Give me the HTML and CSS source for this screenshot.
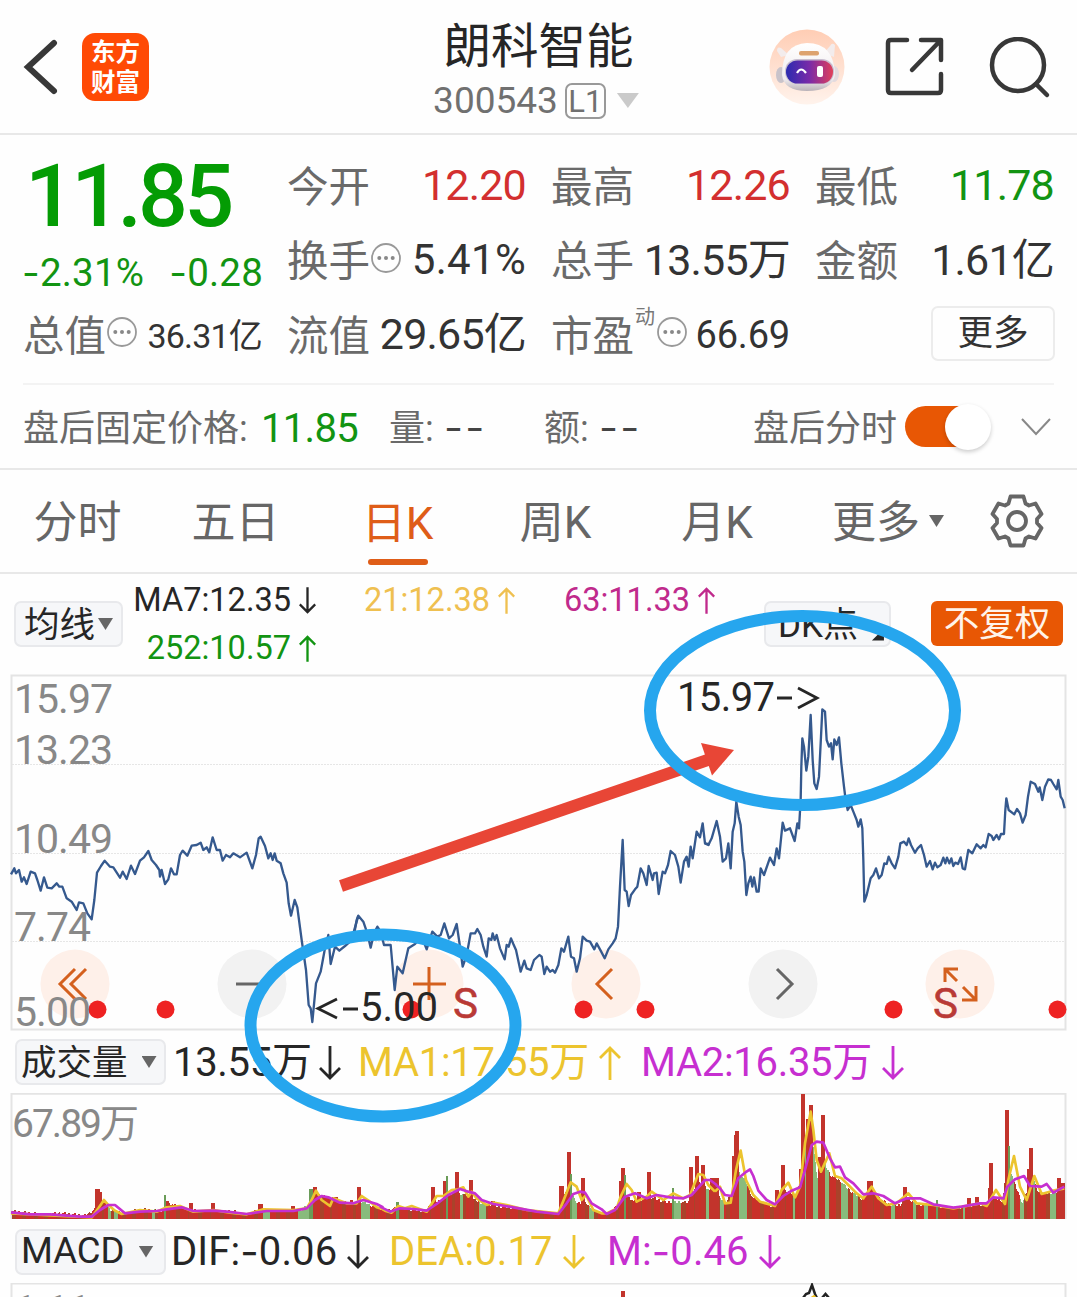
FILE: index.html
```html
<!DOCTYPE html>
<html lang="zh-CN">
<head>
<meta charset="utf-8">
<title>朗科智能 300543</title>
<link rel="stylesheet" href="styles.css">
</head>
<body>
<svg width="0" height="0" class="defs">
  <symbol id="down" viewBox="0 0 22 34"><path d="M11 0V32M1 22L11 32L21 22"/></symbol>
  <symbol id="up" viewBox="0 0 22 34"><path d="M11 34V2M1 12L11 2L21 12"/></symbol>
  <symbol id="info" viewBox="0 0 30 30"><circle cx="15" cy="15" r="14" fill="none" stroke="#999" stroke-width="1.8"/><g fill="#888"><circle cx="8.3" cy="15" r="2"/><circle cx="15" cy="15" r="2"/><circle cx="21.7" cy="15" r="2"/></g></symbol>
</svg>
<main class="app">
  <header class="top">
    <div class="top-left">
      <svg class="back" viewBox="0 0 36 56"><path d="M31 4L5 28L31 52"/></svg>
      <div class="logo"><span>东方</span><span>财富</span></div>
    </div>
    <div class="title">
      <h1>朗科智能</h1>
      <div class="code"><span class="code-no">300543</span><span class="level">L1</span><i class="tri tri-light"></i></div>
    </div>
    <div class="top-right">
      <svg class="robot" viewBox="0 0 76 76">
        <defs>
          <linearGradient id="rb" x1="0" y1="0" x2="0" y2="1"><stop offset="0" stop-color="#ffcdb4"/><stop offset="1" stop-color="#fff3ec"/></linearGradient>
          <linearGradient id="rv"><stop offset="0" stop-color="#2b2bb0"/><stop offset=".5" stop-color="#7a2aa8"/><stop offset="1" stop-color="#e0405a"/></linearGradient>
          <linearGradient id="rw" x1="0" y1="0" x2="0" y2="1"><stop offset="0" stop-color="#fff"/><stop offset=".75" stop-color="#f0ecee"/><stop offset="1" stop-color="#b9b2b8"/></linearGradient>
        </defs>
        <circle cx="38" cy="38" r="37.5" fill="url(#rb)"/>
        <path d="M8 22Q8 17 12 19L20 26L12 28ZM66 16Q63 13 61 17L55 24L65 28Z" fill="#f3ecec"/>
        <ellipse cx="12" cy="46" rx="5" ry="8" fill="#c9c3ca"/><ellipse cx="65" cy="45" rx="5" ry="8" fill="#e3dade"/>
        <path d="M13 46Q13 15 38 14Q65 14 66 46Q63 62 38 62Q15 62 13 46Z" fill="url(#rw)"/>
        <rect x="30" y="22" width="20" height="4.5" rx="2" fill="#dda36f"/>
        <rect x="16" y="30" width="49" height="25" rx="12" fill="#c9bfd0"/>
        <rect x="17" y="31.500" width="47" height="23" rx="11.500" fill="url(#rv)"/>
        <path d="M28 44Q32 37 37 44" fill="none" stroke="#fff" stroke-width="2.2"/><rect x="48" y="37" width="6" height="11" rx="2" fill="#fff"/>
      </svg>
      <svg class="share" viewBox="0 0 60 60"><path d="M22 3H6Q3 3 3 6V53Q3 56 6 56H53Q56 56 56 53V37M36 3H56V23M55 4L27 33"/></svg>
      <svg class="search" viewBox="0 0 62 62"><circle cx="29" cy="28" r="26"/><path d="M47 47L58 58"/></svg>
    </div>
  </header>

  <section class="quote">
    <div class="price">
      <strong>11.85</strong>
      <div class="change"><span><b>-</b>2.31%</span><span><b>-</b>0.28</span></div>
    </div>
    <div class="cell"><label>今开</label><span class="v red">12.20</span></div>
    <div class="cell"><label>最高</label><span class="v red">12.26</span></div>
    <div class="cell"><label>最低</label><span class="v green">11.78</span></div>
    <div class="cell"><label>换手</label><svg class="info"><use href="#info"/></svg><span class="v v42">5.41%</span></div>
    <div class="cell"><label>总手</label><span class="v">13.55万</span></div>
    <div class="cell"><label>金额</label><span class="v">1.61亿</span></div>
    <div class="cell"><label>总值</label><svg class="info"><use href="#info"/></svg><span class="v v34">36.31亿</span></div>
    <div class="cell"><label>流值</label><span class="v v43">29.65亿</span></div>
    <div class="cell"><label>市盈</label><sup>动</sup><svg class="info"><use href="#info"/></svg><span class="v v38">66.69</span></div>
    <div class="cell"><button class="more">更多</button></div>
  </section>

  <section class="after">
    <span class="a1">盘后固定价格:</span><span class="a2 green">11.85</span>
    <span class="a3">量: <b>--</b></span><span class="a4">额: <b>--</b></span>
    <span class="a5">盘后分时</span>
    <span class="toggle"><i></i></span>
    <svg class="chev" viewBox="0 0 30 18"><path d="M1 1L15 16L29 1"/></svg>
  </section>

  <nav class="tabs">
    <span>分时</span><span>五日</span><span class="on">日K</span><span>周K</span><span>月K</span>
    <span class="tab-more">更多<i class="tri"></i></span>
    <svg class="gear" viewBox="-27 -27 54 54"><path d="M-6.500 -24.500H6.500L8.500 -17.500L12 -15.500L18.500 -17.500L24.500 -7L20 -2V2L24.500 7L18.500 17.500L12 15.500L8.500 17.500L6.500 24.500H-6.500L-8.500 17.500L-12 15.500L-18.500 17.500L-24.500 7L-20 2V-2L-24.500 -7L-18.500 -17.500L-12 -15.500L-8.500 -17.500Z"/><circle r="9"/></svg>
  </nav>

  <section class="ma">
    <button class="pill">均线<i class="tri"></i></button>
    <div class="ma-list">
      <span class="dark">MA7:12.35<svg class="ar"><use href="#down"/></svg></span>
      <span class="gold">21:12.38<svg class="ar"><use href="#up"/></svg></span>
      <span class="rose">63:11.33<svg class="ar"><use href="#up"/></svg></span>
      <span class="green">252:10.57<svg class="ar"><use href="#up"/></svg></span>
    </div>
    <button class="pill dk">DK点<i></i></button>
    <button class="adj">不复权</button>
  </section>

  <svg class="kline" viewBox="0 674 1077 357">
    <path class="frame" d="M11.500 1029.500V675.500H1065.500V1029.500Z"/>
    <path class="grid" d="M12 764.500H1065M12 853.500H1065M12 941.500H1065"/>
    <g class="btn-warm"><circle cx="75" cy="984" r="34.500"/><circle cx="429" cy="984" r="34.500"/><circle cx="606" cy="984" r="34.500"/><circle cx="960" cy="984" r="34.500"/></g>
    <g class="btn-cool"><circle cx="252" cy="984" r="34.500"/><circle cx="783" cy="984" r="34.500"/></g>
    <g class="line">
      <polyline transform="translate(0 820) scale(.33333)" points="33,163 43,145 48,160 57,150 65,185 72,172 80,192 92,155 105,160 112,180 122,212 132,172 142,203 155,205 170,190 178,200 187,200 200,235 215,245 230,270 237,247 250,250 262,280 275,298 283,240 291,158 303,138 314,122 330,140 340,142 360,173 368,155 380,177 393,137 405,162 420,122 432,112 445,93 455,120 468,135 478,150 480,170 485,150 495,192 505,178 513,145 522,163 530,163 540,105 548,92 562,107 575,77 590,75 602,68 610,90 620,82 628,97 638,52 650,90 660,90 668,122 678,105 690,112 700,100 720,112 740,98 757,145 768,105 776,55 782,50 795,78 805,115 812,100 818,120 824,100 830,122 842,130 850,160 860,188 866,250 873,287 884,240 892,262 905,360 918,450 926,555 932,565 937,606 948,490 962,455 975,385 985,345 992,432 1005,380 1018,392 1035,378 1050,365 1062,345 1070,300 1075,287"/>
      <polyline transform="translate(350 820) scale(.33333)" points="10,340 25,287 40,305 52,340 62,383 72,340 82,320 92,335 102,375 122,375 134,510 142,440 158,460 175,385 195,372 215,350 230,388 247,335 262,350 272,345 283,310 297,355 308,345 320,312 330,380 338,440 350,405 362,340 375,340 382,327 392,345 400,380 410,410 416,355 424,360 428,340 434,360 440,345 450,385 464,418 470,375 476,380 483,355 490,372 498,390 512,455 523,422 530,445 542,450 552,420 568,405 575,410 583,462 590,440 600,455 608,450 615,458 625,435 634,385 642,395 655,350 663,410 672,415 680,455 690,415 698,350 710,362 720,365 733,388 740,370 752,392 764,415 775,388 788,370 797,355 804,320 810,200 818,60 824,210 830,215 836,258 843,225 855,208 862,200 872,145 880,160 890,195 896,138 908,180 912,160 920,158 926,222 938,155 945,160 954,135 962,93 975,105 985,140 992,188 1002,125 1010,110 1016,140 1022,80 1028,115 1040,35 1050,52 1058,10 1065,70 1080,73"/>
      <polyline transform="translate(700 760) scale(.33333)" points="15,250 25,255 35,235 50,183 60,230 68,305 78,295 85,250 92,325 98,215 104,190 109,125 116,170 122,195 128,275 133,305 139,405 145,370 152,350 157,380 162,352 170,395 176,395 182,325 192,345 210,293 222,315 230,265 237,295 248,188 255,212 270,205 284,243 292,190 297,205 302,120 304,20 307,-65 312,-40 319,32 325,-10 332,-135 338,0 343,70 350,87 357,50 363,-70 367,-152 375,-145 380,-60 387,-40 393,-50 398,-2 403,-62 410,-45 417,-68 424,10 432,80 437,120 443,150 452,135 460,155 470,180 475,200 482,178 487,205 490,300 493,425 500,405 512,355 520,345 528,325 537,355 545,345 553,310 560,312 566,290 575,310 585,325 595,290 601,250 612,245 620,255 626,235 633,255 645,278 653,265 663,255 672,285 680,320 690,303 698,328 705,308 712,322 722,315 730,293 736,310 741,293 748,310 754,295 760,318 766,308 774,312 782,292 788,325 795,328 805,270 817,280 830,253 842,265 850,255 857,262 866,222 875,228 880,240 890,225 897,238 903,222 912,222 916,150 919,115 926,150 943,163 951,147 960,160 968,188 977,165 984,110 992,65 1005,72 1015,95 1019,82 1027,120 1035,80 1045,58 1053,60 1060,72 1070,88 1075,60 1082,110 1088,120 1094,145"/>
    </g>
    <g class="ico-warm"><path d="M75 969L60 984L75 999M86 969L71 984L86 999M413 984H446M429 967V1000M612 969L597 984L612 999M957 981L945 969M945 982V969H958M963 987L975 999M962 1000H976V986"/></g>
    <g class="ico-cool"><path d="M236 984H268M777 969L792 984L777 999"/></g>
    <g class="dot"><circle cx="97.500" cy="1009.500" r="9"/><circle cx="165.500" cy="1009.500" r="9"/><circle cx="411.500" cy="1009.500" r="9"/><circle cx="583.500" cy="1009.500" r="9"/><circle cx="645.500" cy="1009.500" r="9"/><circle cx="893.500" cy="1009.500" r="9"/><circle cx="1057.500" cy="1009.500" r="9"/></g>
    <g class="axis">
      <text x="14" y="713" textLength="99">15.97</text><text x="14" y="764" textLength="99">13.23</text><text x="14" y="853" textLength="99">10.49</text><text x="14" y="941" textLength="77">7.74</text><text x="14" y="1026" textLength="77">5.00</text>
    </g>
    <g class="mark">
      <text x="677" y="711" textLength="98">15.97</text><path d="M777 698H792M798 688L817 698L798 708"/>
      <text x="360" y="1021" textLength="78">5.00</text><path d="M337 999L318 1008.500L337 1018M343 1009H358"/>
    </g>
    <g class="sell"><text x="453" y="1018">S</text><text x="933" y="1018">S</text></g>
  </svg>

  <section class="ind ind-vol">
    <button class="pill">成交量<i class="tri"></i></button>
    <span class="dark">13.55万<svg class="ar"><use href="#down"/></svg></span>
    <span class="yellow">MA1:17.55万<svg class="ar"><use href="#up"/></svg></span>
    <span class="violet">MA2:16.35万<svg class="ar"><use href="#down"/></svg></span>
  </section>

  <svg class="volume" viewBox="0 1093 1077 127">
    <path class="frame" d="M11.500 1219V1093.800H1065.500V1219"/>
    <g class="axis peak"><text x="12" y="1137" textLength="127">67.89万</text></g>
    <g id="bars" shape-rendering="crispEdges"></g>
    <g class="avg yellow">
      <polyline transform="translate(0 1070) scale(.33333)" points="33,430 275,442 295,415 312,390 325,405 345,422 365,432 420,420 470,425 500,412 540,408 580,425 640,420 690,428 740,433 790,418 880,420 920,415 935,390 948,362 965,390 990,408 1000,385 1040,400 1070,400 1085,378 1110,395 1130,412 1150,418"/>
      <polyline transform="translate(380 1070) scale(.33333)" points="0,412 15,422 35,428 55,408 75,415 95,408 140,425 170,378 190,378 215,360 235,358 250,352 265,380 275,365 290,385 320,405 340,398 380,405 440,420 535,430 555,380 572,337 590,350 605,390 618,375 640,420 665,430 680,430 710,415 722,380 740,342 755,360 770,395 800,380 815,365 850,390 880,370 910,385 930,375 955,312 970,315 985,345 1005,365"/>
      <polyline transform="translate(720 1070) scale(.33333)" points="-15,365 0,350 15,400 32,398 48,300 62,242 78,330 100,375 120,395 165,408 185,360 205,338 225,382 240,350 255,220 272,125 280,180 290,270 303,305 328,250 345,318 365,325 385,345 410,370 430,385 455,350 475,385 500,405 530,400 565,370 590,400 640,405 700,415 780,400 800,408 828,360 855,402 865,330 882,258 900,350 920,390 943,318 965,372 1000,362 1033,355"/>
    </g>
    <g class="avg violet">
      <polyline transform="translate(0 1070) scale(.33333)" points="33,427 90,433 150,433 240,440 275,440 300,420 325,405 345,405 375,430 420,425 470,423 500,418 545,412 580,423 640,422 680,425 740,432 800,423 880,423 920,415 945,390 965,378 985,382 1020,398 1060,400 1090,390 1130,402 1150,412"/>
      <polyline transform="translate(380 1070) scale(.33333)" points="0,410 30,425 60,415 100,417 140,422 170,402 205,375 240,357 265,365 285,370 305,390 340,402 400,412 470,425 535,432 560,400 580,372 600,365 615,368 635,400 665,418 680,432 705,420 735,380 765,370 800,385 830,375 870,382 910,385 935,375 975,330 990,330 1010,345"/>
      <polyline transform="translate(720 1070) scale(.33333)" points="-12,345 0,355 15,375 35,378 55,325 75,308 90,298 100,318 115,362 140,390 165,403 190,378 215,362 240,352 255,300 275,225 290,215 310,218 330,265 345,292 360,290 375,322 400,340 430,373 460,370 490,378 525,400 560,385 600,385 640,403 700,413 725,410 780,400 800,400 820,382 850,385 862,350 885,328 912,318 930,348 965,350 980,342 1000,368 1033,350"/>
    </g>
  </svg>

  <section class="ind ind-macd">
    <button class="pill">MACD<i class="tri"></i></button>
    <span class="dark">DIF:<b>-</b>0.06<svg class="ar"><use href="#down"/></svg></span>
    <span class="yellow">DEA:0.17<svg class="ar"><use href="#down"/></svg></span>
    <span class="violet">M:<b>-</b>0.46<svg class="ar"><use href="#down"/></svg></span>
  </section>

  <svg class="macd" viewBox="0 1283 1077 14">
    <path class="frame" d="M11.500 1297V1283.500H1065.500V1297"/>
    <g class="axis"><text x="14" y="1324" textLength="77">1.11</text></g>
    <rect x="621" y="1291" width="4" height="6" fill="#c2342c"/>
    <path d="M803 1298L806 1294L809 1293L812 1285L815 1294L817 1298M822 1298L825.500 1294L829 1298" fill="none" stroke="#222" stroke-width="2.500"/>
    <path d="M811 1298L814 1296L816 1298" fill="none" stroke="#f0c020" stroke-width="2"/>
  </svg>

  <svg class="notes" viewBox="0 0 1077 1297">
    <path d="M341 886L712 758.500" stroke="#e84636" stroke-width="12"/>
    <path d="M734 750L701 743L712 775.500Z" fill="#e84636"/>
    <ellipse cx="802.500" cy="710.500" rx="152.500" ry="94.500"/>
    <ellipse cx="383" cy="1025.500" rx="132.500" ry="91"/>
  </svg>
</main>
<script src="volume.js"></script>
</body>
</html>
```
FILE: styles.css
```css
* { box-sizing: border-box; }
body { margin: 0; background: #fefefe; font-family: Roboto, "Noto Sans CJK SC", sans-serif; line-height: 1; color: #333; }
button { font: inherit; color: inherit; line-height: 1; padding: 0; white-space: nowrap; }
b { font-weight: 400; font-family: Inter, sans-serif; }
.defs { position: absolute; }
.app { position: relative; width: 1077px; height: 1297px; overflow: hidden; display: flex; flex-direction: column; }
.app > * { flex: none; }
.green { color: #129412; }
.red { color: #d32f2f; }
.dark { color: #262626; }
.gold { color: #efc050; }
.rose { color: #c02a8c; }
.yellow { color: #ecc42e; }
.violet { color: #c62fd0; }
.tri { display: inline-block; flex: none; width: 15px; height: 12px; background: #666; clip-path: polygon(0 0, 100% 0, 50% 100%); }

.top { height: 135px; border-bottom: 2px solid #e8e8e8; display: grid; grid-template-columns: 360px 1fr 360px; }
.top-left { display: flex; align-items: center; padding-left: 23px; }
.back { width: 36px; height: 56px; margin-right: 23px; }
.back path { fill: none; stroke: #383838; stroke-width: 6; stroke-linecap: round; }
.logo { width: 67px; height: 68px; border-radius: 13px; background: #ff4a05; color: #fff; display: flex; flex-direction: column; align-items: center; justify-content: center; gap: 5px; padding-top: 3px; font-size: 24.500px; font-weight: 700; }
.title { padding-top: 23px; text-align: center; }
h1 { margin: 0; font-size: 47.500px; font-weight: 400; line-height: 49px; color: #262626; }
.code { display: flex; align-items: center; justify-content: center; margin: 10px 5px 0 0; height: 37px; font-size: 37px; color: #707070; }
.level { width: 41px; height: 36px; margin: 0 11px 0 7px; border: 2px solid #999; border-radius: 7px; font-size: 31px; line-height: 34px; }
.tri-light { width: 22px; height: 15px; background: #cacaca; }
.top-right { display: flex; align-items: center; padding-left: 52px; }
.robot { width: 76px; height: 76px; }
.share { width: 60px; height: 60px; margin: 0 0 0 40px; }
.search { width: 62px; height: 62px; margin: 3px 0 0 44px; }
.share path, .search * { fill: none; stroke: #383838; stroke-width: 4.500; stroke-linecap: round; stroke-linejoin: round; }

.quote { height: 250px; margin: 0 23px; padding: 13px 0 0 1px; border-bottom: 2px solid #f3f3f3; display: grid; grid-template: repeat(3, 74.500px) / repeat(4, 238px); column-gap: 26px; }
.price { grid-row: span 2; color: #049c04; }
.price strong { display: block; font-size: 88px; font-weight: 500; letter-spacing: -3.800px; margin: 4px 0 13px 1px; white-space: nowrap; }
.change { display: flex; justify-content: space-between; font-size: 38.500px; letter-spacing: .2px; margin-right: -1px; color: #129412; }
.change b { margin-left: -2px; }
.cell { display: flex; align-items: center; min-width: 0; }
.cell label { font-size: 41.500px; color: #6a6a6a; margin-left: -1px; padding-top: 4px; white-space: nowrap; }
.cell .v { margin-left: auto; font-size: 43px; letter-spacing: -.8px; padding-top: 1px; white-space: nowrap; }
.cell .v42 { font-size: 42px; letter-spacing: .3px; }
.cell .v34 { font-size: 34px; padding-top: 3px; }
.cell .v38 { font-size: 38px; letter-spacing: -.2px; padding-top: 2px; }
.info { flex: none; width: 30px; height: 30px; margin: -4px 0 0 1px; }
.cell sup { align-self: flex-start; width: 22px; font-size: 20px; color: #777; margin: 10px 0 0; text-align: center; }
.more { width: 124px; height: 55px; margin: -2px -1px 0 auto; border: 2px solid #ececec; border-radius: 7px; background: none; font-size: 35.500px; padding-top: 1px; }

.after { height: 85px; border-bottom: 2px solid #e8e8e8; display: flex; align-items: center; padding-left: 23px; font-size: 36px; color: #6a6a6a; white-space: nowrap; }
.after > span:not(.toggle) { padding-top: 4px; }
.after b { display: inline-block; color: #444; letter-spacing: 2px; transform: scaleX(1.15); transform-origin: 0 50%; margin-left: 1px; }
.a1 { width: 238px; }
.a2 { width: 128px; font-size: 40px; letter-spacing: -.7px; }
.a3 { width: 155px; }
.a4 { width: 209px; }
.a5 { width: 152px; }
.toggle { width: 84px; height: 41px; border-radius: 21px; background: #e85704; display: flex; align-items: center; justify-content: flex-end; }
.toggle i { width: 46px; height: 46px; margin-right: -2px; flex: none; border-radius: 50%; background: #fff; box-shadow: 0 2px 4px rgba(0,0,0,.2); }
.chev { width: 30px; height: 18px; margin-left: 32px; }
.chev path { fill: none; stroke: #888; stroke-width: 2; }

.tabs { height: 104px; border-bottom: 2px solid #e8e8e8; display: grid; grid-template-columns: 155px 161px 163px 153px 170px 172px 1fr; font-size: 44px; color: #666; }
.tabs span { display: flex; align-items: center; justify-content: center; padding-top: 4px; white-space: nowrap; }
.tabs .on { color: #df5d18; flex-direction: column; padding-top: 24px; }
.tabs .on::after { content: ""; width: 60px; height: 6px; border-radius: 3px; background: #df5d18; margin-top: 13px; }
.tab-more .tri { margin: -4px 0 0 9px; }
.gear { width: 54px; height: 54px; margin: 24px 0 0 16px; }
.gear * { fill: none; stroke: #666; stroke-width: 3.800; stroke-linejoin: round; }

.ma { height: 100px; display: flex; align-items: flex-start; padding-left: 14px; }
.pill { display: flex; flex: none; align-items: center; justify-content: center; height: 46px; padding-top: 3px; background: #f6f7f9; border: 2px solid #e8e9ec; border-radius: 7px; font-size: 35.500px; color: #262626; }
.pill .tri { margin-top: -3px; }
.ma .pill { width: 109px; margin-top: 27px; }
.ma .pill .tri { margin-left: 3px; }
.ma-list { width: 629px; margin-left: 12px; padding-top: 2px; display: grid; grid-template: repeat(2, 48px) / 181px 199px 200px; font-size: 32.500px; }
.ma-list span { display: flex; align-items: center; justify-content: flex-end; }
.ar { flex: none; width: 22px; height: 34px; fill: none; stroke: currentColor; stroke-width: 2.800; }
.ma-list .ar { width: 17px; height: 27px; margin-left: 8px; stroke-width: 3; }
.ma .dk { width: 127px; font-size: 35px; justify-content: flex-start; padding-left: 12px; }
.dk i { width: 12px; height: 12px; margin: 18px 0 0 14px; background: #262626; clip-path: polygon(100% 0, 100% 100%, 0 100%); }
.adj { width: 132px; height: 45px; margin: 27px 0 0 40px; padding-top: 2px; border: 0; border-radius: 6px; background: #e85704; color: #fff4ea; font-size: 35.500px; }

.kline { width: 1077px; height: 357px; display: block; overflow: visible; }
.frame { fill: none; stroke: #e4e4e4; stroke-width: 2; }
.grid { stroke: #e6e6e6; stroke-width: 1; stroke-dasharray: 2 1; }
.axis { font-size: 41px; fill: #888; }
.peak { font-size: 39px; }
.line { fill: none; stroke: #35598e; }
.line polyline { stroke-width: 7; stroke-linejoin: round; }
.btn-warm { fill: #fef0e9; }
.btn-cool { fill: #f2f2f2; }
.ico-warm { fill: none; stroke: #d4601e; stroke-width: 3; }
.ico-cool { fill: none; stroke: #666; stroke-width: 3; }
.dot { fill: #ee2222; }
.mark { font-size: 40px; fill: #262626; }
.mark path { fill: none; stroke: #262626; stroke-width: 2.800; }
.sell { font-size: 42px; fill: #b93a36; stroke: #b93a36; stroke-width: .6; }

.ind { display: flex; align-items: center; padding-left: 15px; font-size: 40px; white-space: nowrap; }
.ind span { display: flex; align-items: center; }
.ind .ar { margin-left: 10px; }
.ind .pill { width: 151px; margin-right: 7px; font-size: 35.500px; justify-content: flex-start; padding-left: 4px; }
.ind .pill .tri { margin-left: 14px; }
.ind-vol { height: 62px; }
.ind-vol span { width: 185px; letter-spacing: -.3px; padding-top: 2px; }
.ind-vol .yellow, .ind-vol .violet { width: 283px; }
.ind-vol .dark .ar { margin-left: 7px; }
.ind-macd { height: 63px; }
.ind-macd .pill { font-size: 36.500px; padding-top: 0; margin-right: 5px; }
.ind-macd .pill .tri { margin-top: 0; }
.ind-macd span { width: 218px; letter-spacing: .1px; }
.volume { width: 1077px; height: 127px; display: block; }
.avg polyline { fill: none; stroke: currentColor; stroke-width: 8; stroke-linejoin: round; }
.macd { width: 1077px; height: 14px; display: block; }
.notes { position: absolute; left: 0; top: 0; width: 1077px; height: 1297px; pointer-events: none; }
.notes ellipse { fill: none; stroke: #26a6ee; stroke-width: 12; }
```
FILE: volume.js
```js
// Turnover profile as x,height pairs; daily bars are interpolated between them.
const base = [11,8,40,5,60,6,85,4,95,10,103,18,110,9,125,6,140,10,155,9,163,8,167,16,185,11,200,8,215,8,235,8,245,4,260,10,275,8,300,9,308,14,312,28,325,22,335,20,350,15,362,17,370,14,385,9,400,12,410,9,425,8,432,18,440,18,447,24,455,27,465,24,480,16,495,13,520,10,540,7,558,6,561,20,570,32,575,17,585,16,595,8,608,5,615,12,622,26,635,17,650,22,665,17,690,17,697,38,710,28,718,24,725,16,732,28,738,48,745,38,752,22,765,15,775,12,780,28,790,27,795,22,800,40,806,80,812,80,816,48,819,28,823,58,830,44,840,38,850,28,862,20,870,32,880,20,890,14,900,14,905,24,915,15,930,14,950,11,965,12,985,15,992,22,1002,18,1007,60,1014,36,1022,16,1032,42,1038,26,1045,26,1055,26,1066,32];
// Single days that stand out: x, height, colour (r or g), width.
const peaks = [[97,30,'r',5],[100,27,'r',3],[165,24,'g',2],[167,18,'r',3],[191,16,'r',4],[213,16,'r',4],[260,15,'r',5],[293,13,'r',4],[311,30,'g',4],[315,32,'r',4],[335,22,'r',6],[351,19,'r',3],[359,32,'r',4],[397,17,'g',3],[433,32,'r',4],[445,38,'r',4],[447,43,'g',2],[457,47,'r',4],[471,39,'r',4],[493,18,'r',4],[561,33,'r',5],[569,67,'r',4],[571,45,'g',2],[583,41,'r',4],[621,38,'r',4],[623,51,'r',4],[625,44,'g',2],[639,27,'r',4],[649,47,'r',4],[673,31,'g',2],[691,52,'r',4],[697,63,'r',4],[703,54,'r',4],[713,41,'r',6],[717,41,'r',4],[733,63,'r',3],[735,84,'r',3],[737,88,'r',4],[777,29,'r',4],[783,54,'r',4],[800,50,'r',3],[803,125,'r',4],[808,100,'r',4],[811,114,'r',4],[820,62,'r',4],[823,104,'r',4],[870,38,'r',6],[905,32,'r',4],[937,19,'g',2],[969,21,'r',4],[977,22,'r',4],[989,31,'r',3],[991,56,'r',4],[1007,109,'r',4],[1009,73,'g',2],[1028,50,'r',3],[1031,71,'r',4],[1059,41,'r',4],[1063,36,'r',4]];
const greens = [[108,111],[114,118],[152,155],[263,270],[298,312],[361,370],[460,463],[479,486],[572,577],[589,594],[674,681],[706,709],[720,724],[739,747],[793,795],[805,807],[813,819],[825,829],[841,848],[853,858],[891,895],[913,916],[924,928],[963,965],[1010,1014],[1020,1024],[1033,1035],[1050,1056]];
const g = document.getElementById('bars');
const add = (x, h, w, fill) => {
  const r = document.createElementNS('http://www.w3.org/2000/svg', 'rect');
  r.setAttribute('x', x); r.setAttribute('y', 1219 - h);
  r.setAttribute('width', w); r.setAttribute('height', h);
  r.setAttribute('fill', fill); g.appendChild(r);
};
let k = 0;
for (let x = 12; x < 1065; x++) {
  while (base[k + 2] < x) k += 2;
  const t = (x - base[k]) / (base[k + 2] - base[k]);
  const day = x >> 1;
  const h = base[k + 1] + t * (base[k + 3] - base[k + 1]) + ((day * 7) % 5 - 2) * .6;
  const green = greens.some(([a, b]) => x >= a && x < b);
  add(x, h, 1, green ? '#88bb7c' : (day * 13) % 11 < 4 ? '#a9432a' : '#c93029');
}
for (const [x, h, c, w] of peaks) add(x - w / 2, h, w, c === 'g' ? '#6a9c58' : '#c2342c');
```
